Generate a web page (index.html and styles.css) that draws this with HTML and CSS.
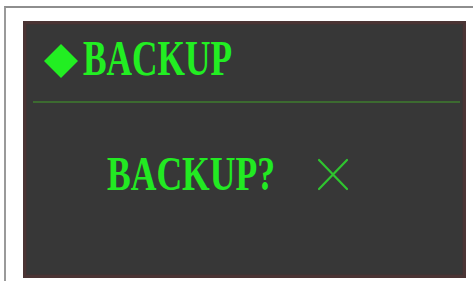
FILE: index.html
```html
<!DOCTYPE html>
<html>
<head>
<meta charset="utf-8">
<link rel="stylesheet" href="styles.css">
</head>
<body>
<div class="frame">
  <div class="panel">
    <div class="header">
      <svg class="diamond" width="36" height="36" viewBox="0 0 36 36"><polygon points="18,1 35,18 18,35 1,18" fill="#22ee22"/></svg>
      <span class="title">BACKUP</span>
    </div>
    <div class="rule"></div>
    <div class="ask">
      <span class="ask-text">BACKUP?</span>
      <svg class="cross" width="32" height="33" viewBox="0 0 32 33"><path d="M2 2 L30 31 M30 2 L2 31" stroke="#2fc42f" stroke-width="2.2" fill="none" stroke-linecap="round"/></svg>
    </div>
  </div>
</div>
</body>
</html>
```
FILE: styles.css
```css
html, body {
  margin: 0;
  padding: 0;
  background: #ffffff;
}
body {
  width: 473px;
  height: 281px;
  overflow: hidden;
}
.frame {
  box-sizing: border-box;
  margin: 6px 0 0 4px;
  border-top: 2px solid #8e8e8e;
  border-left: 2px solid #9a9a9a;
  padding: 13px 7px 0 17px;
  height: 275px;
}
.panel {
  width: 437px;
  height: 251px;
  background: #373737;
  border: 3px solid #4a3434;
  box-shadow: inset 0 0 0 1px #3d3434;
}
.header {
  display: flex;
  align-items: flex-start;
  padding: 9px 0 0 17px;
  height: 68px;
}
.diamond {
  margin-top: 10px;
  flex: none;
}
.title {
  display: inline-block;
  margin-left: 4px;
  font-family: "Liberation Serif", serif;
  font-weight: bold;
  font-size: 50px;
  line-height: 50px;
  color: #22ee22;
  transform: scaleX(0.706);
  transform-origin: left center;
}
.rule {
  height: 2px;
  margin: 0 3px 0 7px;
  background: #3c6a30;
}
.ask {
  display: flex;
  align-items: flex-start;
  padding: 47px 0 0 81px;
}
.ask-text {
  display: inline-block;
  font-family: "Liberation Serif", serif;
  font-weight: bold;
  font-size: 48px;
  line-height: 48px;
  color: #22ea22;
  transform: scaleX(0.741);
  transform-origin: left center;
  margin-right: -59px;
}
.cross {
  flex: none;
  margin: 8px 0 0 42px;
}
```
